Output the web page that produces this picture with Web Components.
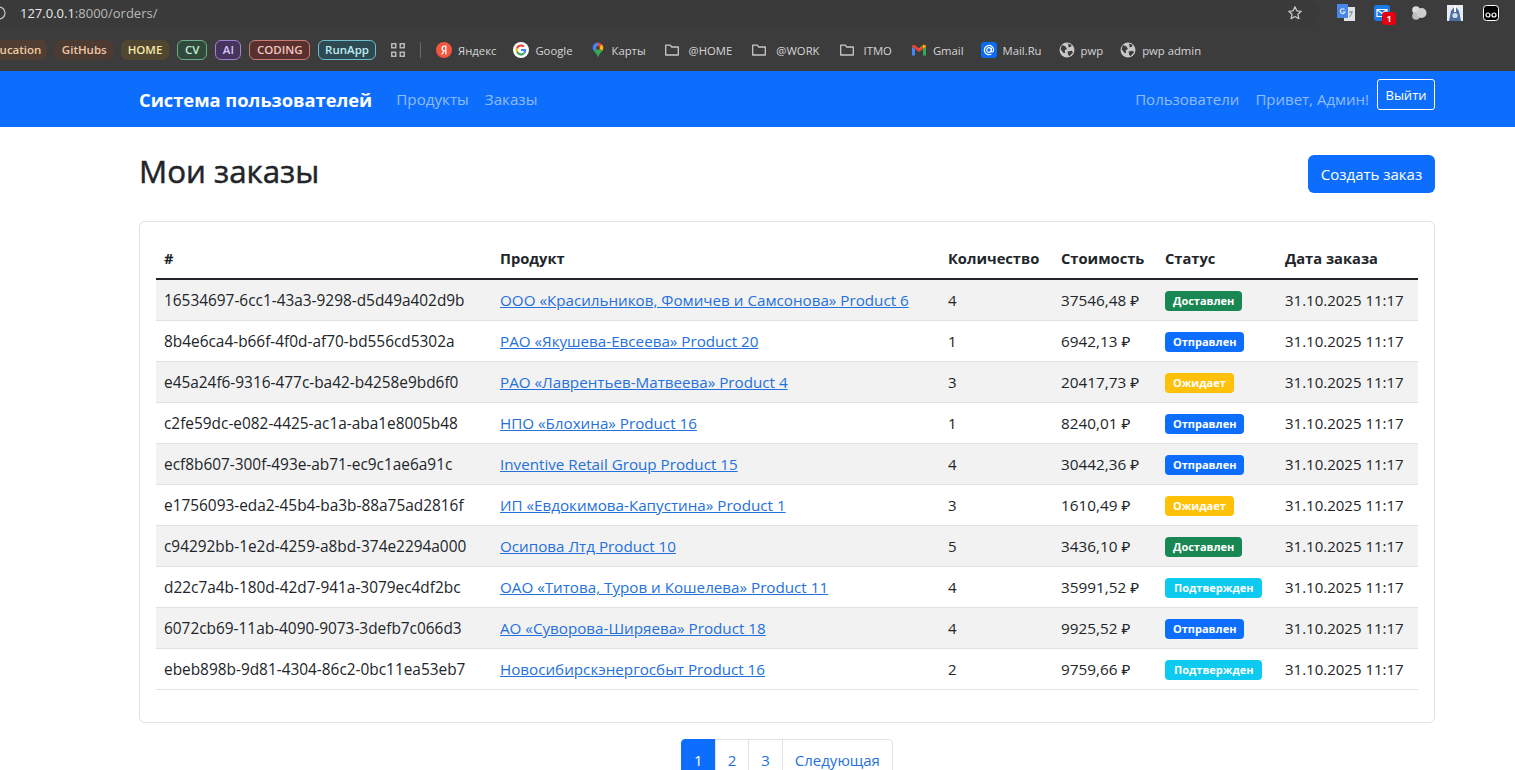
<!DOCTYPE html>
<html lang="ru">
<head>
<meta charset="utf-8">
<title>Мои заказы</title>
<style>
  html, body { margin: 0; padding: 0; height: 770px; overflow: hidden; background: #fff; }
  body { font-family: "Open Sans", "Noto Sans", sans-serif; color: #212529; }
</style>
</head>
<body>
<browser-chrome></browser-chrome>
<app-navbar></app-navbar>
<orders-page></orders-page>

<script>
const ICONS = {
  yandex: `<svg width="16" height="16" viewBox="0 0 16 16"><circle cx="8" cy="8" r="8" fill="#f2563f"/><path d="M9.2 3.6h1.3v8.8H9.2V9.2h-.7l-1.900 3.200H5.100l2.100-3.400C6.100 8.600 5.500 7.700 5.500 6.400c0-1.700 1.100-2.800 3-2.800zm0 1.100h-.6c-1 0-1.700.6-1.700 1.700 0 1.200.7 1.800 1.700 1.800h.6z" fill="#fff"/></svg>`,
  google: `<svg width="16" height="16" viewBox="0 0 16 16"><circle cx="8" cy="8" r="8" fill="#fff"/><path d="M13.300 8.100c0-.4 0-.7-.1-1H8v2h3a2.600 2.600 0 0 1-1.100 1.700l1.700 1.300c1-.9 1.700-2.300 1.700-4z" fill="#4285f4"/><path d="M8 13.500c1.500 0 2.700-.5 3.600-1.300l-1.700-1.300c-.5.3-1.100.5-1.900.5-1.400 0-2.700-1-3.100-2.300L3.100 10c.9 2 2.800 3.500 4.900 3.500z" fill="#34a853"/><path d="M4.900 9.100a3.300 3.300 0 0 1 0-2.200L3.100 5.500a5.500 5.500 0 0 0 0 4.900z" fill="#fbbc05"/><path d="M8 4.600c.8 0 1.500.3 2.100.8l1.500-1.500A5.400 5.400 0 0 0 3.100 5.500l1.800 1.400C5.300 5.600 6.600 4.600 8 4.600z" fill="#ea4335"/></svg>`,
  maps: `<svg width="16" height="16" viewBox="0 0 16 16"><path d="M8 .5a5.300 5.300 0 0 0-5.300 5.300c0 1.300.5 2.400 1.200 3.300L8 5.800z" fill="#4285f4"/><path d="M8 .5c1.600 0 3.100.7 4 1.900L8 5.800z" fill="#ea4335"/><path d="M12 2.400c.8.900 1.300 2.100 1.300 3.400 0 1.200-.4 2.200-1.100 3.100L8 5.800z" fill="#fbbc05"/><path d="M3.900 9.100 8 5.800l4.200 3.100C10.700 10.800 8.700 12.500 8 15.700 7.500 12.800 5.300 11 3.900 9.100z" fill="#34a853"/><circle cx="8" cy="5.800" r="1.900" fill="#7a2b22"/></svg>`,
  folder: `<svg width="16" height="16" viewBox="0 0 16 16" fill="none" stroke="#c7c7c7" stroke-width="1.300"><path d="M1.700 3.200h4.500l1.500 1.800h6.600v8H1.700z" stroke-linejoin="round"/></svg>`,
  gmail: `<svg width="16" height="16" viewBox="0 0 16 16"><path d="M1 13.500V4.800L4 7v6.500z" fill="#4285f4"/><path d="M12 13.500V7l3-2.200v8.700z" fill="#34a853"/><path d="M1 4.800C1 3 3 2.300 4 3.200L8 6.400v3L1 4.800z" fill="#ea4335"/><path d="M8 6.400l4-3.200c1-.9 3-.2 3 1.600L8 9.400z" fill="#fbbc05"/><path d="M4 7 8 9.700l4-2.700V3.800L8 7 4 3.800z" fill="#ea4335"/></svg>`,
  mailru: `<svg width="16" height="16" viewBox="0 0 16 16"><rect width="16" height="16" rx="3.500" fill="#0a6cf5"/><circle cx="8" cy="8" r="2.300" fill="none" stroke="#fff" stroke-width="1.200"/><path d="M10.300 5.700v3.100c0 1.700 2.300 1.600 2.300-.8A4.600 4.600 0 1 0 10.400 12" fill="none" stroke="#fff" stroke-width="1.200"/></svg>`,
  globe: `<svg width="16" height="16" viewBox="0 0 16 16"><circle cx="8" cy="8" r="7.500" fill="#c7c7c7"/><path d="M2.800 3 6.500 4.500 8 7 5.700 8.300 6.200 10.700 4.800 11.300 1.700 7.600zM9.200 1.400l3.600 1.700-1.300 2-2 .2zM8.600 9.600l3.900-.9 1.600 1.500-3.700 4-1.300-1.400z" fill="#3c3c3c"/></svg>`,
  apps: `<svg width="14" height="14" viewBox="0 0 14 14" fill="none" stroke="#b8b8b8" stroke-width="1.500"><rect x=".75" y=".75" width="4" height="4"/><rect x="9.250" y=".75" width="4" height="4"/><rect x=".75" y="9.250" width="4" height="4"/><rect x="9.250" y="9.250" width="4" height="4"/></svg>`
};

class BrowserChrome extends HTMLElement {
  constructor() {
    super();
    this.attachShadow({ mode: "open" });
  }

  tag(text, color, bg, border, pad = 5) {
    return `<span class="tag" style="color:${color};background:${bg};border-color:${border};padding:0 ${pad}px">${text}</span>`;
  }

  mark(icon, text, cls = "") {
    return `<span class="mark ${cls}">${ICONS[icon]}<span>${text}</span></span>`;
  }

  connectedCallback() {
    this.shadowRoot.innerHTML = /* html */ `
      <style>
        :host { display: block; height: 71px; background: #3c3c3c; font-family: "Open Sans", sans-serif; overflow: hidden; }
        .top { height: 30px; display: flex; align-items: flex-start; }
        .omni { flex: 1; height: 28px; display: flex; align-items: center; background: #3a3a3a; border-radius: 0 14px 14px 0; padding: 0 16px 2px 0; box-sizing: border-box; }
        .info { margin: 0 14px 0 -8px; display: block; }
        .url { font-size: 13px; color: #b9b9b9; }
        .url b { font-weight: 400; color: #e8e8e8; }
        .star { margin-left: auto; }
        .ext { display: flex; align-items: center; height: 26px; padding: 0 16px 0 18px; }
        .ext > * { display: block; }
        .bar { height: 40px; display: flex; align-items: center; margin-left: -20px; white-space: nowrap; }
        .tag { font-size: 11.5px; font-weight: 600; height: 20px; line-height: 18px; border: 1px solid; border-radius: 6px; box-sizing: border-box; margin-right: 8px; }
        .apps { display: flex; margin: 0 14px 0 7px; }
        .sep { width: 1px; height: 16px; background: #6a6a6a; margin: 0 15px 0 1px; }
        .mark { display: flex; align-items: center; gap: 6px; font-size: 11.3px; color: #d6d6d6; margin-right: 17px; }
        .mark.maps { margin-right: 18px; }
        .mark.folder { gap: 9px; margin-right: 19px; }
      </style>
      <div class="top">
        <div class="omni">
          <svg class="info" width="14" height="14" viewBox="0 0 14 14" fill="none" stroke="#c7c7c7" stroke-width="1.200"><circle cx="7" cy="7" r="6"/></svg>
          <div class="url"><b>127.0.0.1</b>:8000/orders/</div>
          <svg class="star" width="16" height="16" viewBox="0 0 16 16" fill="none" stroke="#c7c7c7" stroke-width="1.300"><path d="M8 1.800l1.900 4 4.300.5-3.200 3 .9 4.300L8 11.500l-3.900 2.100.9-4.300-3.200-3 4.300-.5z" stroke-linejoin="round"/></svg>
        </div>
        <div class="ext">
          <svg width="18" height="18" viewBox="0 0 18 18" style="margin-right:19px"><rect x="7" y="3" width="11" height="14" fill="#dfe3e8"/><path d="M12 8h4M14 7v2M12.500 13l2.500-4" stroke="#7a8a99" fill="none"/><rect x="0" y="0" width="11" height="14" fill="#4a86e8"/><path d="M7.500 5.500A2.400 2.400 0 1 0 8 8H5.700" fill="none" stroke="#dbe7fb" stroke-width="1.200"/></svg>
          <span style="position:relative;width:17px;height:17px;margin-right:20px">
            <svg width="17" height="17" viewBox="0 0 17 17" style="display:block"><rect width="16" height="16" rx="3" fill="#1a7be8"/><path d="M3 4.500h10v7H3zM3 4.500l5 4 5-4" fill="none" stroke="#fff" stroke-width="1.200"/></svg>
            <span style="position:absolute;left:8px;top:7px;width:14px;height:13px;border-radius:3px;background:#e3000f;color:#fff;font-size:9px;font-weight:700;line-height:13px;text-align:center">1</span>
          </span>
          <svg width="16" height="16" viewBox="0 0 16 16" style="margin-right:20px"><circle cx="5" cy="5" r="3.800" fill="#dcdcdc"/><circle cx="5" cy="11" r="3.800" fill="#bdbdbd"/><circle cx="10.500" cy="8" r="5" fill="#cfcfcf"/></svg>
          <svg width="16" height="16" viewBox="0 0 16 16" style="margin-right:20px"><rect width="16" height="16" fill="#e8edf4"/><path d="M8 1 4 6 2 16h12l-2-10z" fill="#4d6f9f"/><circle cx="8" cy="10.500" r="2.600" fill="#cfdcee"/><path d="M7 1h2v6H7z" fill="#fff"/></svg>
          <svg width="16" height="16" viewBox="0 0 16 16"><rect x=".5" y=".5" width="15" height="15" rx="3" fill="#000" stroke="#fff"/><circle cx="5" cy="10" r="2" fill="none" stroke="#fff" stroke-width="1.200"/><circle cx="11" cy="10" r="2" fill="none" stroke="#fff" stroke-width="1.200"/></svg>
        </div>
      </div>
      <div class="bar">
        ${this.tag("Education", "#f0c9a2", "#4f3e31", "#4f3e31")}
        ${this.tag("GitHubs", "#eec7aa", "#4d3b31", "#4d3b31", 5.5)}
        ${this.tag("HOME", "#f7e6a6", "#4f4730", "#4f4730", 5.5)}
        ${this.tag("CV", "#c9ecd4", "#2f4a3a", "#6fae87", 7)}
        ${this.tag("AI", "#dcc6f5", "#46345f", "#a57fd6", 6.5)}
        ${this.tag("CODING", "#f3c5bf", "#5a302e", "#c77c76", 6.5)}
        ${this.tag("RunApp", "#bfeaf2", "#2d4a52", "#6fbccb", 6)}
        <span class="apps">${ICONS.apps}</span>
        <span class="sep"></span>
        ${this.mark("yandex", "Яндекс")}
        ${this.mark("google", "Google")}
        ${this.mark("maps", "Карты", "maps")}
        ${this.mark("folder", "@HOME", "folder")}
        ${this.mark("folder", "@WORK", "folder")}
        ${this.mark("folder", "ITMO", "folder")}
        ${this.mark("gmail", "Gmail")}
        ${this.mark("mailru", "Mail.Ru")}
        ${this.mark("globe", "pwp")}
        ${this.mark("globe", "pwp admin")}
      </div>
    `;
  }
}

class AppNavbar extends HTMLElement {
  constructor() {
    super();
    this.attachShadow({ mode: "open" });
  }

  connectedCallback() {
    this.shadowRoot.innerHTML = /* html */ `
      <style>
        :host { display: block; background: #0d6efd; height: 56px; font-family: "Open Sans", sans-serif; }
        nav { width: 1296px; height: 56px; margin-left: 139px; display: flex; align-items: center; box-sizing: border-box; }
        .brand { font-size: 18.3px; font-weight: 700; color: #fff; margin-right: 24px; }
        a { font-size: 15.2px; color: rgba(255, 255, 255, 0.55); text-decoration: none; }
        .links { display: flex; gap: 16px; }
        .right { margin-left: auto; display: flex; align-items: center; gap: 16px; }
        .right a { font-size: 15px; }
        .right span { display: flex; align-items: center; gap: 8px; font-size: 15px; color: rgba(255, 255, 255, 0.55); }
        button { font: inherit; font-size: 13px; color: #fff; background: none; border: 1px solid #fff; border-radius: 3px; width: 58px; height: 31px; padding: 0; margin-top: -9px; }
      </style>
      <nav>
        <div class="brand">Система пользователей</div>
        <div class="links"><a>Продукты</a><a>Заказы</a></div>
        <div class="right"><a>Пользователи</a><span>Привет, Админ!<button>Выйти</button></span></div>
      </nav>
    `;
  }
}

class StatusBadge extends HTMLElement {
  constructor() {
    super();
    this.attachShadow({ mode: "open" });
  }

  connectedCallback() {
    const colors = {
      "Доставлен": ["#198754", "#fff"],
      "Отправлен": ["#0d6efd", "#fff"],
      "Ожидает": ["#ffc107", "#fff"],
      "Подтвержден": ["#0dcaf0", "#fff"]
    };
    const text = this.textContent.trim();
    const [bg, fg] = colors[text];
    const pad = text === "Подтвержден" ? 9 : 8;
    this.shadowRoot.innerHTML = /* html */ `
      <style>
        :host { display: inline-block; vertical-align: middle; margin-bottom: 2px; }
        span { display: block; height: 20px; line-height: 20px; padding: 0 ${pad}px; border-radius: 4px; font-size: 11px; font-weight: 700; background: ${bg}; color: ${fg}; }
      </style>
      <span><slot></slot></span>
    `;
  }
}

class OrdersTable extends HTMLElement {
  constructor() {
    super();
    this.attachShadow({ mode: "open" });
  }

  connectedCallback() {
    const rows = [
      ["16534697-6cc1-43a3-9298-d5d49a402d9b", "ООО «Красильников, Фомичев и Самсонова» Product 6", 4, "37546,48 ₽", "Доставлен"],
      ["8b4e6ca4-b66f-4f0d-af70-bd556cd5302a", "РАО «Якушева-Евсеева» Product 20", 1, "6942,13 ₽", "Отправлен"],
      ["e45a24f6-9316-477c-ba42-b4258e9bd6f0", "РАО «Лаврентьев-Матвеева» Product 4", 3, "20417,73 ₽", "Ожидает"],
      ["c2fe59dc-e082-4425-ac1a-aba1e8005b48", "НПО «Блохина» Product 16", 1, "8240,01 ₽", "Отправлен"],
      ["ecf8b607-300f-493e-ab71-ec9c1ae6a91c", "Inventive Retail Group Product 15", 4, "30442,36 ₽", "Отправлен"],
      ["e1756093-eda2-45b4-ba3b-88a75ad2816f", "ИП «Евдокимова-Капустина» Product 1", 3, "1610,49 ₽", "Ожидает"],
      ["c94292bb-1e2d-4259-a8bd-374e2294a000", "Осипова Лтд Product 10", 5, "3436,10 ₽", "Доставлен"],
      ["d22c7a4b-180d-42d7-941a-3079ec4df2bc", "ОАО «Титова, Туров и Кошелева» Product 11", 4, "35991,52 ₽", "Подтвержден"],
      ["6072cb69-11ab-4090-9073-3defb7c066d3", "АО «Суворова-Ширяева» Product 18", 4, "9925,52 ₽", "Отправлен"],
      ["ebeb898b-9d81-4304-86c2-0bc11ea53eb7", "Новосибирскэнергосбыт Product 16", 2, "9759,66 ₽", "Подтвержден"]
    ];
    this.shadowRoot.innerHTML = /* html */ `
      <style>
        :host { display: block; font-size: 15px; }
        .grid { display: grid; grid-template-columns: 336px 448px 113px 104px 120px 141px; }
        .head, .row { display: grid; grid-template-columns: subgrid; grid-column: 1 / -1; }
        .head > div { height: 40px; line-height: 41px; font-size: 14.7px; font-weight: 700; padding: 0 8px; border-bottom: 2px solid #212529; }
        .row > div { height: 40px; line-height: 40px; padding: 0 8px; border-bottom: 1px solid #dee2e6; white-space: nowrap; }
        .row:nth-child(even) > div { background: #f2f2f2; }
        .row > .uuid { font-size: 15.4px; line-height: 42px; }
        .price { font-size: 15.3px; }
        a { color: #2470dc; text-decoration: underline; font-size: 15.2px; }
      </style>
      <div class="grid">
        <div class="head"><div>#</div><div>Продукт</div><div>Количество</div><div>Стоимость</div><div>Статус</div><div>Дата заказа</div></div>
        ${rows.map(r => `<div class="row"><div class="uuid">${r[0]}</div><div><a>${r[1]}</a></div><div>${r[2]}</div><div class="price">${r[3]}</div><div><status-badge>${r[4]}</status-badge></div><div>31.10.2025 11:17</div></div>`).join("")}
      </div>
    `;
  }
}

class PageNav extends HTMLElement {
  constructor() {
    super();
    this.attachShadow({ mode: "open" });
  }

  connectedCallback() {
    this.shadowRoot.innerHTML = /* html */ `
      <style>
        :host { display: flex; justify-content: center; font-size: 15px; }
        a { display: block; padding: 0 12px; height: 38px; line-height: 40px; border: 1px solid #dee2e6; margin-left: -1px; color: #2470dc; box-sizing: border-box; }
        a.active { background: #0d6efd; border-color: #0d6efd; color: #fff; border-radius: 4px 0 0 4px; margin-left: 0; }
        a:last-child { border-radius: 0 4px 4px 0; }
      </style>
      <a class="active">1</a><a>2</a><a>3</a><a>Следующая</a>
    `;
  }
}

class OrdersPage extends HTMLElement {
  constructor() {
    super();
    this.attachShadow({ mode: "open" });
  }

  connectedCallback() {
    this.shadowRoot.innerHTML = /* html */ `
      <style>
        :host { display: block; width: 1296px; margin-left: 139px; }
        .title { display: flex; justify-content: space-between; align-items: center; padding-top: 28px; height: 38px; margin-bottom: 28px; }
        h1 { margin: -6px 0 0; font-size: 31.3px; font-weight: 500; line-height: 38px; -webkit-text-stroke: 0.5px #212529; }
        .create { font-size: 15px; color: #fff; background: #0d6efd; border-radius: 6px; width: 127px; height: 38px; line-height: 38px; text-align: center; }
        .card { border: 1px solid #dee2e6; border-radius: 6px; padding: 16px; height: 502px; box-sizing: border-box; margin-bottom: 16px; }
      </style>
      <div class="title"><h1>Мои заказы</h1><div class="create">Создать заказ</div></div>
      <div class="card"><orders-table></orders-table></div>
      <page-nav></page-nav>
    `;
  }
}

customElements.define("browser-chrome", BrowserChrome);
customElements.define("app-navbar", AppNavbar);
customElements.define("status-badge", StatusBadge);
customElements.define("orders-table", OrdersTable);
customElements.define("page-nav", PageNav);
customElements.define("orders-page", OrdersPage);
</script>
</body>
</html>
